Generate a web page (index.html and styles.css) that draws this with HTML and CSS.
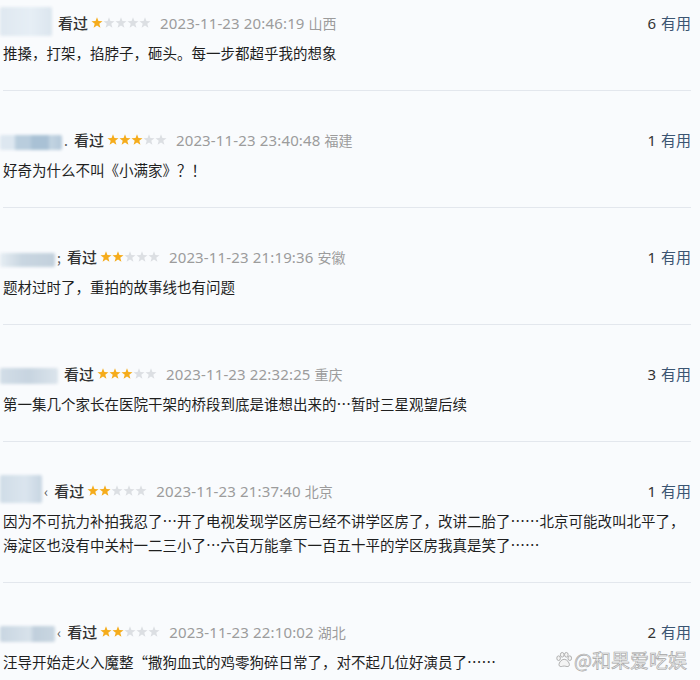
FILE: index.html
```html
<!DOCTYPE html>
<html lang="zh-CN">
<head>
<meta charset="utf-8">
<title>短评</title>
<link rel="stylesheet" href="styles.css">
</head>
<body>
<svg class="defs" width="0" height="0" aria-hidden="true">
  <symbol id="star" viewBox="0 0 12 12">
    <path d="M6 0.2 L7.41 4.06 L11.52 4.21 L8.28 6.74 L9.41 10.69 L6 8.4 L2.59 10.69 L3.72 6.74 L0.48 4.21 L4.59 4.06Z"/>
  </symbol>
</svg>

<div class="list">
  <div class="item">
    <div class="meta">
      <div class="left">
        <span class="user u1"></span>
        <span class="seen">看过</span>
        <span class="stars"><svg class="on"><use href="#star"/></svg><svg><use href="#star"/></svg><svg><use href="#star"/></svg><svg><use href="#star"/></svg><svg><use href="#star"/></svg></span>
        <span class="time">2023-11-23 20:46:19</span>
        <span class="loc">山西</span>
      </div>
      <span class="useful"><span class="num">6</span>有用</span>
    </div>
    <p class="text">推搡，打架，掐脖子，砸头。每一步都超乎我的想象</p>
  </div>

  <div class="item">
    <div class="meta">
      <div class="left">
        <span class="user u2"></span><span class="frag">.</span>
        <span class="seen">看过</span>
        <span class="stars"><svg class="on"><use href="#star"/></svg><svg class="on"><use href="#star"/></svg><svg class="on"><use href="#star"/></svg><svg><use href="#star"/></svg><svg><use href="#star"/></svg></span>
        <span class="time">2023-11-23 23:40:48</span>
        <span class="loc">福建</span>
      </div>
      <span class="useful"><span class="num">1</span>有用</span>
    </div>
    <p class="text">好奇为什么不叫《小满家》？！</p>
  </div>

  <div class="item">
    <div class="meta">
      <div class="left">
        <span class="user u3"></span><span class="frag">;</span>
        <span class="seen">看过</span>
        <span class="stars"><svg class="on"><use href="#star"/></svg><svg class="on"><use href="#star"/></svg><svg><use href="#star"/></svg><svg><use href="#star"/></svg><svg><use href="#star"/></svg></span>
        <span class="time">2023-11-23 21:19:36</span>
        <span class="loc">安徽</span>
      </div>
      <span class="useful"><span class="num">1</span>有用</span>
    </div>
    <p class="text">题材过时了，重拍的故事线也有问题</p>
  </div>

  <div class="item">
    <div class="meta">
      <div class="left">
        <span class="user u4"></span>
        <span class="seen">看过</span>
        <span class="stars"><svg class="on"><use href="#star"/></svg><svg class="on"><use href="#star"/></svg><svg class="on"><use href="#star"/></svg><svg><use href="#star"/></svg><svg><use href="#star"/></svg></span>
        <span class="time">2023-11-23 22:32:25</span>
        <span class="loc">重庆</span>
      </div>
      <span class="useful"><span class="num">3</span>有用</span>
    </div>
    <p class="text">第一集几个家长在医院干架的桥段到底是谁想出来的…暂时三星观望后续</p>
  </div>

  <div class="item">
    <div class="meta">
      <div class="left">
        <span class="user u5"></span><span class="frag">‹</span>
        <span class="seen">看过</span>
        <span class="stars"><svg class="on"><use href="#star"/></svg><svg class="on"><use href="#star"/></svg><svg><use href="#star"/></svg><svg><use href="#star"/></svg><svg><use href="#star"/></svg></span>
        <span class="time">2023-11-23 21:37:40</span>
        <span class="loc">北京</span>
      </div>
      <span class="useful"><span class="num">1</span>有用</span>
    </div>
    <p class="text">因为不可抗力补拍我忍了…开了电视发现学区房已经不讲学区房了，改讲二胎了……北京可能改叫北平了，海淀区也没有中关村一二三小了…六百万能拿下一百五十平的学区房我真是笑了……</p>
  </div>

  <div class="item">
    <div class="meta">
      <div class="left">
        <span class="user u6"></span><span class="frag">‹</span>
        <span class="seen">看过</span>
        <span class="stars"><svg class="on"><use href="#star"/></svg><svg class="on"><use href="#star"/></svg><svg><use href="#star"/></svg><svg><use href="#star"/></svg><svg><use href="#star"/></svg></span>
        <span class="time">2023-11-23 22:10:02</span>
        <span class="loc">湖北</span>
      </div>
      <span class="useful"><span class="num">2</span>有用</span>
    </div>
    <p class="text">汪导开始走火入魔整“撒狗血式的鸡零狗碎日常了，对不起几位好演员了……</p>
  </div>
</div>

<div class="watermark">
  <svg class="paw" viewBox="0 0 20 20" width="18" height="18">
    <ellipse cx="4" cy="8" rx="2" ry="2.6"/>
    <ellipse cx="8" cy="4.2" rx="2" ry="2.6"/>
    <ellipse cx="12.6" cy="4.2" rx="2" ry="2.6"/>
    <ellipse cx="16.4" cy="8" rx="2" ry="2.6"/>
    <path d="M10.2 9.2 C13.5 9.2 16 13 16 15.2 C16 17.4 13.8 17.6 12.2 17 C11 16.6 9.4 16.6 8.2 17 C6.6 17.6 4.4 17.4 4.4 15.2 C4.4 13 6.9 9.2 10.2 9.2Z"/>
  </svg>
  <span class="wm-text">@和果爱吃娱</span>
</div>
</body>
</html>
```

FILE: styles.css
```css
html, body {
  margin: 0;
  padding: 0;
}

body {
  width: 700px;
  height: 680px;
  overflow: hidden;
  position: relative;
  background: #f9fbfd;
  font-family: "Noto Sans CJK SC", "Noto Sans", sans-serif;
  color: #222;
}

.defs {
  position: absolute;
  width: 0;
  height: 0;
}

.list {
  padding: 0 9px 0 3px;
  border-right: 1px solid #eef1f4;
  width: 688px;
}

.item {
  padding: 37px 0 25px;
  border-bottom: 1px solid #e3e7ed;
}

.item:first-child {
  padding-top: 11px;
}

.meta {
  display: flex;
  align-items: center;
  justify-content: space-between;
  height: 24px;
}

.left {
  display: flex;
  align-items: center;
  height: 24px;
}

.user {
  display: block;
  margin-left: -3px;
  height: 18px;
  border-radius: 2px;
  filter: blur(1.6px);
}

.u1 {
  width: 52px;
  height: 29px;
  margin-top: -4px;
  background: linear-gradient(90deg, #dfe8f0, #e6eef5 60%, #dbe5ee);
}

.u2 {
  width: 62px;
  height: 15px;
  margin-top: 4px;
  background: linear-gradient(90deg, #dde7f0 0, #dde7f0 14px, #b9cddd 16px, #b9cddd 30px, #a9c1d5 32px, #a9c1d5 48px, #c3d4e2 50px, #b5c9da 62px);
}

.u3 {
  width: 55px;
  height: 14px;
  margin-top: 6px;
  background: linear-gradient(90deg, #e6edf3, #c9d6e1 40%, #c2d0dc);
}

.u4 {
  width: 58px;
  height: 16px;
  margin-top: 4px;
  background: linear-gradient(90deg, #d2dde7, #c7d4e0 50%, #dbe4ec);
}

.u5 {
  width: 42px;
  height: 28px;
  margin-top: -4px;
  background: linear-gradient(90deg, #cfdce7, #dbe5ee 60%, #c7d5e2);
}

.u6 {
  width: 55px;
  height: 16px;
  margin-top: 4px;
  background: linear-gradient(90deg, #c8d5e1 0, #d8e2eb 30px, #c0cfdc 34px, #c9d6e1 55px);
}

.frag {
  font-size: 14px;
  color: #555;
  margin-left: 2px;
  line-height: 24px;
}

.seen {
  margin-left: 6px;
  font-size: 15px;
  font-weight: 500;
  color: #333;
  line-height: 24px;
}

.stars {
  display: flex;
  margin-left: 3px;
  gap: 0;
}

.stars svg {
  width: 12px;
  height: 12px;
  fill: #dcdfe3;
}

.stars svg.on {
  fill: #f5ac1c;
}

.time {
  margin-left: 9px;
  font-family: "Noto Sans", sans-serif;
  font-size: 15px;
  letter-spacing: 0.15px;
  color: #9c9c9c;
  line-height: 24px;
}

.loc {
  margin-left: 4px;
  font-size: 14px;
  color: #9c9c9c;
  line-height: 24px;
}

.useful {
  font-size: 15px;
  color: #3b5572;
  line-height: 24px;
}

.num {
  font-family: "Noto Sans", sans-serif;
  color: #333;
  margin-right: 5px;
}

.text {
  margin: 6px 0 0;
  font-size: 14.5px;
  line-height: 24px;
  color: #1f1f1f;
}

.watermark {
  position: absolute;
  right: 13px;
  bottom: 8px;
  display: flex;
  align-items: center;
  gap: 1px;
}

.paw {
  fill: #f4f4f4;
  stroke: #a8a8a8;
  stroke-width: 1;
}

.wm-text {
  font-size: 19px;
  line-height: 24px;
  color: #f2f2f2;
  -webkit-text-stroke: 0.6px #a3a3a3;
}
```
